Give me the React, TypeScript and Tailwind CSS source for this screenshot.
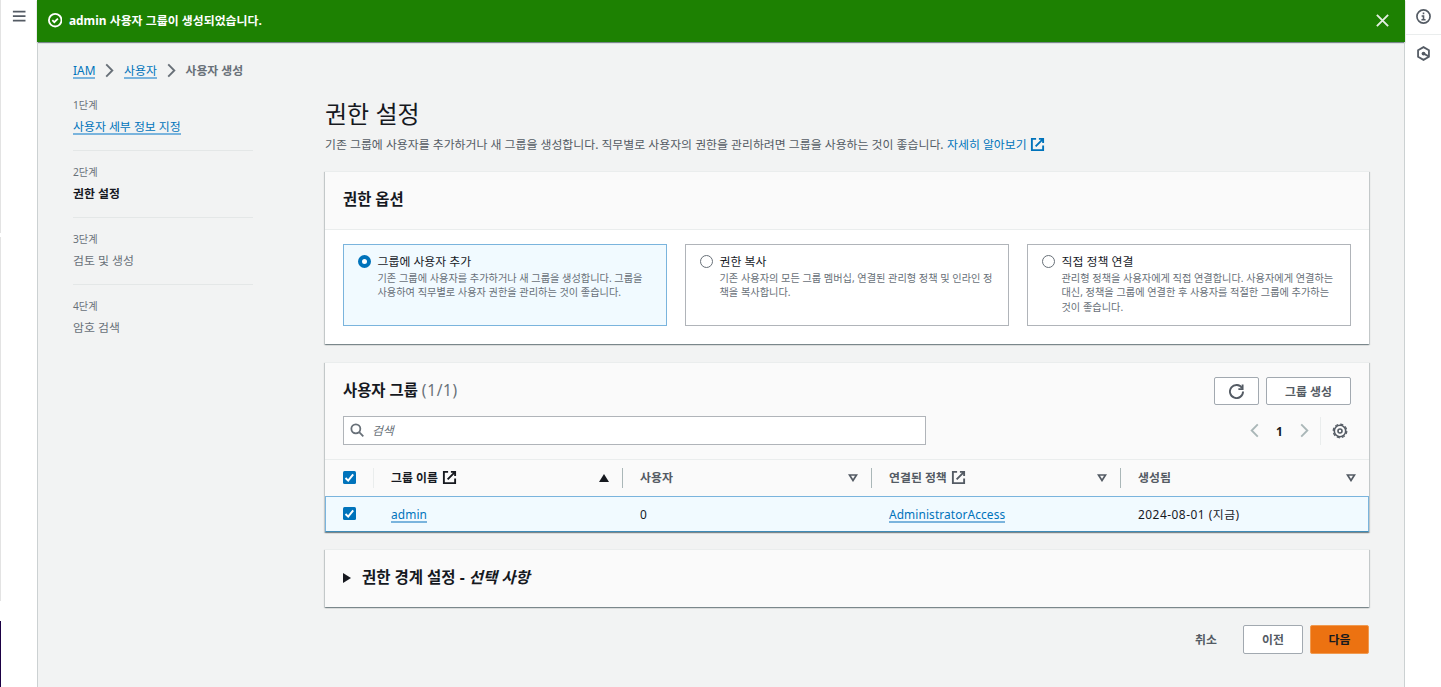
import type { ReactNode } from 'react';
import { clsx } from 'clsx';

const steps = [
  { label: '1단계', title: '사용자 세부 정보 지정', state: 'done' },
  { label: '2단계', title: '권한 설정', state: 'active' },
  { label: '3단계', title: '검토 및 생성', state: 'todo' },
  { label: '4단계', title: '암호 검색', state: 'todo' },
];

const options = [
  {
    title: '그룹에 사용자 추가',
    lines: [
      '기존 그룹에 사용자를 추가하거나 새 그룹을 생성합니다. 그룹을',
      '사용하여 직무별로 사용자 권한을 관리하는 것이 좋습니다.',
    ],
    checked: true,
  },
  {
    title: '권한 복사',
    lines: ['기존 사용자의 모든 그룹 멤버십, 연결된 관리형 정책 및 인라인 정', '책을 복사합니다.'],
    checked: false,
  },
  {
    title: '직접 정책 연결',
    lines: [
      '관리형 정책을 사용자에게 직접 연결합니다. 사용자에게 연결하는',
      '대신, 정책을 그룹에 연결한 후 사용자를 적절한 그룹에 추가하는',
      '것이 좋습니다.',
    ],
    checked: false,
  },
];

const columns = [
  { title: '그룹 이름', external: true, sorted: true },
  { title: '사용자', external: false, sorted: false },
  { title: '연결된 정책', external: true, sorted: false },
  { title: '생성됨', external: false, sorted: false },
];

function Icon({ children, className }: { children: ReactNode; className?: string }) {
  return (
    <svg
      viewBox="0 0 16 16"
      fill="none"
      stroke="currentColor"
      strokeWidth="2"
      className={clsx('shrink-0', className ?? 'size-[14.4px]')}
    >
      {children}
    </svg>
  );
}

function ExternalIcon({ className }: { className?: string }) {
  return (
    <Icon className={className}>
      <path d="M9.500 2H14v4.500M6 10l8-8" />
      <path d="M14 9v5H2V2h4.500" />
    </Icon>
  );
}

function Chevron({ flip, className }: { flip?: boolean; className?: string }) {
  return (
    <Icon className={className}>
      <path d={flip ? 'M11.500 1.500 5 8l6.500 6.500' : 'M4.500 1.500 11 8l-6.500 6.500'} />
    </Icon>
  );
}

function Link({ children }: { children: ReactNode }) {
  return (
    <a href="#" className="block h-[18px] border-b-2 border-[#7ab4dd] leading-[18px] text-[#0073bb]">
      {children}
    </a>
  );
}

function Checkbox() {
  return (
    <span className="flex size-[13px] shrink-0 items-center justify-center rounded-[1.5px] bg-[#0073bb]">
      <svg viewBox="0 0 13 13" fill="none" stroke="#fff" strokeWidth="2" className="size-[13px]">
        <path d="m2.500 7 2.700 2.600 5-6.200" />
      </svg>
    </span>
  );
}

function Container({ children, className }: { children: ReactNode; className?: string }) {
  return (
    <section
      className={clsx(
        'border-t border-[#eaeded] shadow-[0_1px_1px_0_rgba(0,28,36,0.3),1px_1px_1px_0_rgba(0,28,36,0.15),-1px_1px_1px_0_rgba(0,28,36,0.15)]',
        className,
      )}
    >
      {children}
    </section>
  );
}

function Flashbar() {
  return (
    <div className="flex h-[42px] shrink-0 items-center bg-[#1d8102] pr-[15px] pb-px pl-[11px] text-white shadow-[0_1px_1px_0_rgba(0,28,36,0.5)]">
      <Icon>
        <circle cx="8" cy="8" r="7" />
        <path d="m4.800 8 2.200 2.200 4-4" />
      </Icon>
      <span className="ml-[6.500px] flex-1 pb-[2px] font-bold tracking-[0.03px]">
        admin 사용자 그룹이 생성되었습니다.
      </span>
      <Icon className="size-[15px] text-[#e4efe1]">
        <path d="m2 2 12 12M14 2 2 14" />
      </Icon>
    </div>
  );
}

function Steps() {
  return (
    <nav className="mt-[17px] w-[180px] shrink-0">
      {steps.map((step, i) => (
        <div
          key={step.label}
          className={clsx('pb-[14px]', i < steps.length - 1 && 'mb-[13px] border-b border-[#e4e7e7]')}
        >
          <div className="mb-[3px] h-4 text-[10.200px] leading-4 text-[#687078]">{step.label}</div>
          <div
            className={clsx(
              'flex h-5 items-center leading-5',
              step.state === 'active' ? 'font-bold text-[#16191f]' : 'text-[#687078]',
            )}
          >
            {step.state === 'done' ? <Link>{step.title}</Link> : step.title}
          </div>
        </div>
      ))}
    </nav>
  );
}

function PermissionOptions() {
  return (
    <Container className="bg-white">
      <div className="flex h-[58px] items-center border-b border-[#eaeded] bg-[#fafafa] px-[18px] pb-px">
        <h2 className="text-[15.400px] font-bold">권한 옵션</h2>
      </div>
      <div className="grid grid-cols-3 gap-[18px] px-[18px] pt-[14px] pb-[18px]">
        {options.map((option) => (
          <label
            key={option.title}
            className={clsx(
              'flex h-[82px] border pt-[7px] pl-[14px]',
              option.checked ? 'border-[#7ab4dd] bg-[#f1faff]' : 'border-[#b0b4b9] bg-white',
            )}
          >
            <span
              className={clsx(
                'mt-[3px] mr-[6.500px] size-[13px] shrink-0 rounded-full',
                option.checked ? 'border-4 border-[#0073bb] bg-white' : 'border border-[#687078]',
              )}
            />
            <span className="whitespace-nowrap">
              <span className="block h-[19px] leading-[19px]">{option.title}</span>
              {option.lines.map((line) => (
                <span key={line} className="block h-[14.400px] text-[10.200px] leading-[15.500px] text-[#687078]">
                  {line}
                </span>
              ))}
            </span>
          </label>
        ))}
      </div>
    </Container>
  );
}

function UserGroups() {
  return (
    <Container className="mt-[18px] bg-[#fafafa]">
      <div className="px-[18px] pt-[14px] pb-[14px]">
        <div className="flex h-7 items-center">
          <h2 className="flex-1 text-[15.400px] font-bold">
            사용자 그룹 <span className="font-normal tracking-[0.7px] text-[#687078]">(1/1)</span>
          </h2>
          <button className="flex h-7 w-[45px] items-center justify-center rounded-[2px] border border-[#a2a9b0] bg-white text-[#545b64]">
            <Icon className="size-[15px]">
              <path d="M10 5.500h4.500V0.500" />
              <path d="M15 8a7 7 0 1 1-1-3.600" />
            </Icon>
          </button>
          <button className="ml-[7px] h-7 w-[85px] rounded-[2px] border border-[#a2a9b0] bg-white pb-px font-bold text-[#545b64]">
            그룹 생성
          </button>
        </div>
        <div className="mt-[11px] flex h-[29px] items-center justify-between">
          <div className="flex h-[29px] w-[583px] items-center border border-[#b0b4b9] bg-white pl-[6px] text-[#687078]">
            <Icon>
              <circle cx="6.500" cy="6.500" r="5" />
              <path d="m10.200 10.200 4.600 4.600" />
            </Icon>
            <span className="ml-[7.500px] pb-[2px] italic">검색</span>
          </div>
          <div className="flex h-7 items-center">
            <Chevron flip className="size-[15px] text-[#aab7b8]" />
            <span className="w-[35px] text-center font-bold">1</span>
            <Chevron className="size-[15px] text-[#aab7b8]" />
            <span className="ml-[8px] h-7 border-l border-[#eaeded]" />
            <Icon className="mr-[3px] ml-[11px] size-[16px] text-[#545b64]">
              <circle cx="8" cy="8" r="5.700" strokeWidth="1.600" />
              <circle cx="8" cy="8" r="6.800" strokeWidth="1.200" strokeDasharray="3.200 2.141" />
              <circle cx="8" cy="8" r="2" strokeWidth="1.600" />
            </Icon>
          </div>
        </div>
      </div>
      <div className="grid h-[37px] grid-cols-[48px_repeat(4,1fr)] items-center border-t border-[#eaeded] font-bold">
        <div className="pb-px pl-[18px]">
          <Checkbox />
        </div>
        {columns.map((column, i) => (
          <div
            key={column.title}
            className={clsx(
              'flex h-5 items-center border-l pr-[13px] pl-[17px]',
              i === 0 ? 'border-[#eaeded]' : 'border-[#aab7b8]',
              !column.sorted && 'text-[#545b64]',
            )}
          >
            <span className="pb-[2px]">{column.title}</span>
            {column.external && <ExternalIcon className="mb-px ml-[4px] size-[15px]" />}
            <svg viewBox="0 0 10 8" className="ml-auto h-2 w-[10px]">
              {column.sorted ? (
                <path d="M5 0 10 8H0z" fill="currentColor" />
              ) : (
                <path d="M1.500 1h7L5 6.500z" fill="none" stroke="currentColor" strokeWidth="1.700" />
              )}
            </svg>
          </div>
        ))}
      </div>
      <div className="grid h-9 grid-cols-[47px_repeat(4,249px)] items-center border border-[#7ab4dd] border-b-[#3f8cb8] bg-[#f1faff]">
        <div className="pb-px pl-[17px]">
          <Checkbox />
        </div>
        <div className="flex pl-[18px] tracking-[0.1px]">
          <Link>admin</Link>
        </div>
        <div className="pl-[18px] tracking-[0.35px]">0</div>
        <div className="flex pl-[18px] tracking-[0.1px]">
          <Link>AdministratorAccess</Link>
        </div>
        <div className="pl-[18px] tracking-[0.5px]">2024-08-01 (지금)</div>
      </div>
    </Container>
  );
}

function PermissionBoundary() {
  return (
    <Container className="mt-[17px] flex h-[58px] items-center bg-[#fafafa] pb-[2px] pl-[18px]">
      <svg viewBox="0 0 8 10" className="h-[10px] w-2">
        <path d="M0 0 8 5 0 10z" fill="currentColor" />
      </svg>
      <h2 className="ml-[11px] pb-[2px] text-[15.500px] font-bold">
        권한 경계 설정 - <i>선택 사항</i>
      </h2>
    </Container>
  );
}

export default function App() {
  return (
    <div
      className="flex h-[687px] w-[1441px] overflow-hidden bg-white text-[11.900px] leading-[20px] text-[#16191f]"
      style={{ fontFamily: '"Noto Sans", "Noto Sans CJK KR", sans-serif' }}
    >
      <div className="flex w-px flex-col">
        <div className="h-[233px] bg-[#e3e3e3]" />
        <div className="mt-1 h-[364px] bg-[#e3e3e3]" />
        <div className="mt-[20px] flex-1 bg-[#1b0044]" />
      </div>
      <aside className="w-9 shrink-0 pt-[9px] pl-[11px] text-[#545b64]">
        <Icon>
          <path d="M1 3h14M1 8h14M1 13h14" />
        </Icon>
      </aside>

      <main className="flex w-[1368px] shrink-0 flex-col bg-[#f2f3f3]">
        <Flashbar />
        <div className="flex-1 border-x border-[#ccd1d2] px-[35px] pt-[18px]">
          <div className="flex h-5 items-center">
            <Link>IAM</Link>
            <Chevron className="mx-[6.800px] size-[15px] text-[#687078]" />
            <Link>사용자</Link>
            <Chevron className="mx-[6.800px] size-[15px] text-[#687078]" />
            <span className="font-bold text-[#687078]">사용자 생성</span>
          </div>
          <div className="flex">
            <Steps />
            <div className="ml-[72px] min-w-0 flex-1 pt-[19px]">
              <h1 className="h-[30px] text-[24px] leading-[29px]">권한 설정</h1>
              <p className="mt-[5px] flex h-5 items-center text-[#545b64]">
                <span>
                  기존 그룹에 사용자를 추가하거나 새 그룹을 생성합니다. 직무별로 사용자의 권한을 관리하려면 그룹을 사용하는
                  것이 좋습니다.
                </span>
                <a href="#" className="ml-[3.500px] flex items-center text-[#0073bb]">
                  자세히 알아보기
                  <ExternalIcon className="ml-[3.500px] size-[15px]" />
                </a>
              </p>
              <div className="mt-[17px]">
                <PermissionOptions />
                <UserGroups />
                <PermissionBoundary />
              </div>
              <div className="mt-[18px] flex h-[29px] items-center justify-end font-bold">
                <button className="mr-[26px] pb-[2px] text-[#545b64]">취소</button>
                <button className="h-[29px] w-[60px] rounded-[2px] border border-[#a2a9b0] bg-white pb-[2px] text-[#545b64]">
                  이전
                </button>
                <button className="ml-[7px] h-[29px] w-[59px] rounded-[2px] border border-[#f09a50] bg-[#ec7211] pb-[2px]">
                  다음
                </button>
              </div>
            </div>
          </div>
        </div>
      </main>

      <aside className="flex flex-1 flex-col text-[#545b64]">
        <div className="flex h-[35px] justify-center border-b border-[#eaeded] pt-[9px]">
          <Icon className="size-[15px]">
            <circle cx="8" cy="8" r="7" strokeWidth="1.800" />
            <path d="M8 3.700v2M6 7.500h2v4M5.800 11.500h4.400" strokeWidth="1.700" />
          </Icon>
        </div>
        <div className="flex justify-center pt-[11px]">
          <Icon className="size-[15px]">
            <path d="M8 1.200 13.800 4.500v7L8 14.800 2.200 11.500v-7z" strokeWidth="1.900" />
            <circle cx="8" cy="8" r="2" fill="currentColor" stroke="none" />
            <path d="m8 8 5.500 3" />
          </Icon>
        </div>
      </aside>
    </div>
  );
}
